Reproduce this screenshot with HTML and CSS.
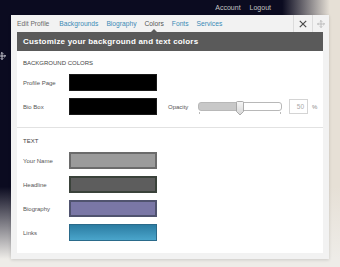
FILE: index.html
```html
<!DOCTYPE html>
<html lang="en">
<head>
    <meta charset="UTF-8">
    <meta name="viewport" content="width=device-width, initial-scale=1.0">
    <title>Customize colors</title>
    <link rel="stylesheet" href="styles.css">
</head>
<body>
    <div class="topbar">
        <a href="#" class="top-link">Account</a>
        <a href="#" class="top-link">Logout</a>
    </div>

    <div class="edge-move">
        <svg viewBox="0 0 8 8" width="8" height="8">
            <path d="M4 0.5 V7.5 M0.5 4 H7.5 M2.8 1.7 L4 0.5 L5.2 1.7 M2.8 6.3 L4 7.5 L5.2 6.3 M1.7 2.8 L0.5 4 L1.7 5.2 M6.3 2.8 L7.5 4 L6.3 5.2" fill="none" stroke="#d8d8e0" stroke-width="0.9"></path>
        </svg>
    </div>

    <div class="dialog">
        <div class="dialog-nav">
            <nav class="tabs">
                <a href="#" class="tab tab-muted">Edit Profile</a>
                <a href="#" class="tab">Backgrounds</a>
                <a href="#" class="tab">Biography</a>
                <a href="#" class="tab tab-active">Colors</a>
                <a href="#" class="tab">Fonts</a>
                <a href="#" class="tab">Services</a>
            </nav>
            <button class="nav-btn nav-close">
                <svg viewBox="0 0 8 8" width="8" height="8">
                    <path d="M0.8 0.8 L7.2 7.2 M7.2 0.8 L0.8 7.2" stroke="#4a4a4a" stroke-width="1.2"></path>
                </svg>
            </button>
            <button class="nav-btn nav-move">
                <svg viewBox="0 0 8 8" width="8" height="8">
                    <path d="M4 0.5 V7.5 M0.5 4 H7.5 M2.8 1.7 L4 0.5 L5.2 1.7 M2.8 6.3 L4 7.5 L5.2 6.3 M1.7 2.8 L0.5 4 L1.7 5.2 M6.3 2.8 L7.5 4 L6.3 5.2" fill="none" stroke="#b8b8b8" stroke-width="0.9"></path>
                </svg>
            </button>
        </div>

        <div class="dialog-body">
            <h2 class="dialog-title">Customize your background and text colors</h2>

            <section class="color-group">
                <h3 class="group-title">BACKGROUND COLORS</h3>
                <div class="color-row">
                    <span class="color-label">Profile Page</span>
                    <span class="swatch swatch-black"></span>
                </div>
                <div class="color-row">
                    <span class="color-label">Bio Box</span>
                    <span class="swatch swatch-black"></span>
                    <div class="opacity">
                        <span class="opacity-label">Opacity</span>
                        <div class="slider">
                            <svg class="slider-handle" viewBox="0 0 8 15" width="8" height="15">
                                <defs>
                                    <linearGradient id="handle-fill" x1="0" y1="0" x2="0" y2="1">
                                        <stop offset="0" stop-color="#f6f6f6"></stop>
                                        <stop offset="1" stop-color="#d4d4d4"></stop>
                                    </linearGradient>
                                </defs>
                                <path d="M0.5 1.5 Q0.5 0.5 1.5 0.5 H6.5 Q7.5 0.5 7.5 1.5 V10.5 L4 14 L0.5 10.5 Z" fill="url(#handle-fill)" stroke="#9a9a9a" stroke-width="0.8"></path>
                            </svg>
                        </div>
                        <span class="opacity-value">50</span>
                        <span class="opacity-unit">%</span>
                    </div>
                </div>
            </section>

            <section class="color-group color-group-divided">
                <h3 class="group-title">TEXT</h3>
                <div class="color-row">
                    <span class="color-label">Your Name</span>
                    <span class="swatch swatch-name"></span>
                </div>
                <div class="color-row">
                    <span class="color-label">Headline</span>
                    <span class="swatch swatch-headline"></span>
                </div>
                <div class="color-row">
                    <span class="color-label">Biography</span>
                    <span class="swatch swatch-bio"></span>
                </div>
                <div class="color-row">
                    <span class="color-label">Links</span>
                    <span class="swatch swatch-links"></span>
                </div>
            </section>
        </div>
    </div>
</body>
</html>
```

FILE: styles.css
```css
body {
    margin: 0;
    height: 267px;
    overflow: hidden;
    font-family: "Liberation Sans", Arial, sans-serif;
    background:
        linear-gradient(to bottom, rgba(238, 236, 232, 0) 70%, #eeece8 97%),
        linear-gradient(to right, rgba(232, 226, 216, 0) 83%, #e6e0d6 97%),
        #0b0b20;
}

.topbar {
    display: flex;
    justify-content: flex-end;
    align-items: center;
    gap: 9px;
    height: 15px;
    padding-right: 69px;
}

.top-link {
    color: #c4c4c4;
    font-size: 7px;
    text-decoration: none;
}

.edge-move {
    position: absolute;
    left: -2px;
    top: 52px;
    line-height: 0;
}

.dialog {
    margin: 0 11px;
    background-color: #f2f2f2;
    padding-bottom: 6px;
    box-shadow: 0 1px 3px rgba(0, 0, 0, 0.15);
}

.dialog-nav {
    display: flex;
    height: 17px;
}

.tabs {
    flex: 1;
    display: flex;
    gap: 8px;
    padding-left: 6px;
}

.tab {
    position: relative;
    display: flex;
    align-items: center;
    font-size: 6.7px;
    color: #3a8ab6;
    text-decoration: none;
}

.tab-muted {
    color: #6a6a6a;
    margin-right: 2px;
}

.tab-active {
    color: #555;
}

/* little notch pointing at the active tab */
.tab-active::after {
    content: "";
    position: absolute;
    left: 50%;
    bottom: 0;
    margin-left: -3px;
    border: 3px solid transparent;
    border-bottom-color: #5a5a5a;
    border-top: none;
}

.nav-btn {
    display: flex;
    align-items: center;
    justify-content: center;
    padding: 0;
    border: none;
    border-left: 1px solid #dcdcdc;
    background: none;
}

.nav-close {
    width: 19px;
}

.nav-move {
    width: 17px;
}

.dialog-body {
    margin: 0 6px;
    background-color: #fff;
}

.dialog-title {
    margin: 0;
    height: 19px;
    padding-left: 6px;
    background-color: #5a5a5a;
    color: #fff;
    font-size: 8px;
    letter-spacing: 0.2px;
    line-height: 19px;
    font-weight: bold;
}

.color-group {
    display: flex;
    flex-direction: column;
    gap: 7px;
    padding: 8px 0 12px 6px;
}

.color-group-divided {
    border-top: 1px solid #e2e2e2;
    padding-top: 9px;
}

.group-title {
    margin: 0;
    font-size: 6px;
    line-height: 8px;
    font-weight: normal;
    color: #444;
}

.color-row {
    display: flex;
    align-items: center;
    height: 17px;
}

.color-label {
    width: 46px;
    font-size: 6px;
    color: #555;
}

.swatch {
    width: 88px;
    height: 17px;
    box-sizing: border-box;
}

.swatch-black {
    background-color: #000;
    border: 1px solid #1a1a1a;
}

.swatch-name {
    background-color: #9b9b9b;
    border: 2px solid #6b6b6b;
}

.swatch-headline {
    background-color: #5d5d5d;
    border: 2px solid #3a423a;
}

.swatch-bio {
    background-color: #7a77a6;
    border: 2px solid #50536f;
}

.swatch-links {
    background: linear-gradient(to bottom, #2b7ca2, #4aa5cb);
    border: 1px solid #2a6a8a;
}

.opacity {
    display: flex;
    align-items: center;
    margin-left: 11px;
    font-size: 6px;
    color: #555;
}

.opacity-label {
    width: 30px;
}

.slider {
    position: relative;
    width: 84px;
    height: 9px;
    box-sizing: border-box;
    border: 1px solid #b8b8b8;
    border-radius: 3px;
    background: linear-gradient(to right, #c8c8c8 49%, #fff 49%);
}

/* tick marks under both ends of the track */
.slider::before,
.slider::after {
    content: "";
    position: absolute;
    bottom: -4px;
    width: 1px;
    height: 2px;
    background-color: #bbb;
}

.slider::before {
    left: 0;
}

.slider::after {
    right: 0;
}

.slider-handle {
    position: absolute;
    left: 37px;
    top: -2px;
}

.opacity-value {
    width: 19px;
    height: 15px;
    margin-left: 7px;
    box-sizing: border-box;
    border: 1px solid #d4d4d4;
    padding-right: 3px;
    text-align: right;
    line-height: 13px;
    font-size: 6.5px;
    color: #aaa;
}

.opacity-unit {
    margin-left: 4px;
    color: #888;
}
```
